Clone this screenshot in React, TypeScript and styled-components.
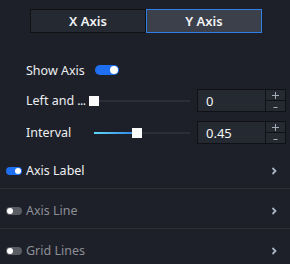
import React from "react";
import styled, { createGlobalStyle } from "styled-components";

const Global = createGlobalStyle`
  html, body { margin: 0; padding: 0; background: #1e2029; }
  body { font-family: "Noto Sans", "Liberation Sans", sans-serif; color: #e8e9ec; }
  * { box-sizing: border-box; }
`;

const Panel = styled.div`
  width: 290px;
  height: 264px;
  background: #1e2029;
  overflow: hidden;
  padding-top: 9px;
`;

const Tabs = styled.div`
  display: flex;
  margin-left: 30px;
  width: 232px;
  height: 24px;
`;

const Tab = styled.div<{ $active?: boolean }>`
  flex: 1;
  display: flex;
  align-items: center;
  justify-content: center;
  font-size: 13px;
  font-weight: 600;
  color: #f2f3f5;
  background: ${(p) => (p.$active ? "#3b404b" : "#252932")};
  border: 1px solid ${(p) => (p.$active ? "#2f7fe6" : "#101115")};
`;

const Form = styled.div`
  display: flex;
  flex-direction: column;
  gap: 9px;
  padding-left: 26px;
  margin-top: 27px;
`;

const Row = styled.div<{ $h: number }>`
  display: flex;
  align-items: center;
  height: ${(p) => p.$h}px;
`;

const Label = styled.div`
  flex: none;
  width: 63px;
  font-size: 12.5px;
  color: #eceef1;
  white-space: nowrap;
`;

const Dots = styled.span`
  letter-spacing: -0.6px;
`;

const Toggle = styled.div<{ $on?: boolean; $small?: boolean }>`
  position: relative;
  flex: none;
  width: ${(p) => (p.$small ? 16 : 24)}px;
  height: ${(p) => (p.$small ? 8 : 10)}px;
  border-radius: 6px;
  background: ${(p) => (p.$on ? "#1f6ff2" : "#5a5d64")};
  &::after {
    content: "";
    position: absolute;
    top: 1px;
    ${(p) => (p.$on ? "right: 1px;" : "left: 1px;")}
    width: ${(p) => (p.$small ? 6 : 8)}px;
    height: ${(p) => (p.$small ? 6 : 8)}px;
    border-radius: 50%;
    background: #ffffff;
  }
`;

const ToggleWrap = styled.div`
  margin-left: 6px;
  display: flex;
`;

const SliderBox = styled.div`
  flex: none;
  width: 106px;
  padding: 0 5px;
  margin-right: 2px;
  display: flex;
  align-items: center;
  height: 100%;
`;

const Track = styled.div`
  position: relative;
  flex: 1;
  height: 2px;
  background: #2b2e37;
`;

const Fill = styled.div`
  position: absolute;
  left: 0;
  top: 0;
  height: 2px;
  background: linear-gradient(90deg, #5fd9f7, #2f7ce4);
`;

const Thumb = styled.div`
  position: absolute;
  top: -4px;
  width: 10px;
  height: 10px;
  margin-left: -5px;
  background: #fafafa;
`;

const Number = styled.div`
  display: flex;
  height: 23px;
  width: 89px;
  border: 1px solid #101116;
  background: #252931;
`;

const NumValue = styled.div`
  flex: 1;
  display: flex;
  align-items: center;
  padding-left: 8px;
  font-size: 13px;
  color: #f4f5f7;
  border-right: 1px solid #101116;
`;

const Stepper = styled.div`
  width: 19px;
  display: flex;
  flex-direction: column;
`;

const Step = styled.div<{ $top?: boolean }>`
  height: ${(p) => (p.$top ? 11 : 10)}px;
  display: flex;
  align-items: center;
  justify-content: center;
  ${(p) => (p.$top ? "border-bottom: 1px solid #101116;" : "")}
`;

const StepIcon = styled.svg`
  width: 7px;
  height: 7px;
  display: block;
`;

const Sections = styled.div`
  margin-top: 5px;
`;

const Section = styled.div`
  display: flex;
  align-items: center;
  height: 40px;
  padding: 4px 0 0 6px;
  border-bottom: 1px solid #2c2e34;
`;

const SectionTitle = styled.div<{ $on?: boolean }>`
  flex: 1;
  margin-left: 4px;
  font-size: 12.5px;
  color: ${(p) => (p.$on ? "#eef0f3" : "#8c8f96")};
`;

const Chevron = styled.svg`
  width: 6px;
  height: 8px;
  margin-right: 13px;
`;

function Slider({ value }: { value: number }) {
  return (
    <SliderBox>
      <Track>
        <Fill style={{ width: `${value * 100}%` }} />
        <Thumb style={{ left: `${value * 100}%` }} />
      </Track>
    </SliderBox>
  );
}

function NumberInput({ value }: { value: string }) {
  return (
    <Number>
      <NumValue>{value}</NumValue>
      <Stepper>
        <Step $top>
          <StepIcon viewBox="0 0 7 7">
            <path d="M0 3.5 H7 M3.5 0 V7" stroke="#a7adb6" strokeWidth="1" />
          </StepIcon>
        </Step>
        <Step>
          <StepIcon viewBox="0 0 7 7">
            <path d="M1.5 4.5 H5.5" stroke="#a7adb6" strokeWidth="1" />
          </StepIcon>
        </Step>
      </Stepper>
    </Number>
  );
}

function SectionRow({ title, on }: { title: string; on?: boolean }) {
  return (
    <Section>
      <Toggle $small $on={on} />
      <SectionTitle $on={on}>{title}</SectionTitle>
      <Chevron viewBox="0 0 6 8">
        <path d="M1.5 1 L4.5 4 L1.5 7" fill="none" stroke="#a9b4c6" strokeWidth="1.8" />
      </Chevron>
    </Section>
  );
}

export default function App() {
  return (
    <Panel>
      <Global />
      <Tabs>
        <Tab>X Axis</Tab>
        <Tab $active>Y Axis</Tab>
      </Tabs>
      <Form>
        <Row $h={20}>
          <Label>Show Axis</Label>
          <ToggleWrap>
            <Toggle $on />
          </ToggleWrap>
        </Row>
        <Row $h={23}>
          <Label>
            Left and <Dots>...</Dots>
          </Label>
          <Slider value={0} />
          <NumberInput value="0" />
        </Row>
        <Row $h={23}>
          <Label>Interval</Label>
          <Slider value={0.45} />
          <NumberInput value="0.45" />
        </Row>
      </Form>
      <Sections>
        <SectionRow title="Axis Label" on />
        <SectionRow title="Axis Line" />
        <SectionRow title="Grid Lines" />
      </Sections>
    </Panel>
  );
}
